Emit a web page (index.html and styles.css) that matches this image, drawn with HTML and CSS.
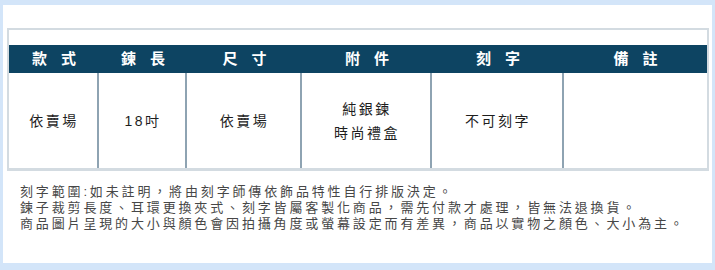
FILE: index.html
```html
<!DOCTYPE html>
<html lang="zh-Hant">
<head>
<meta charset="utf-8">
<title>商品規格</title>
<link rel="stylesheet" href="styles.css">
</head>
<body>
<div class="frame">
  <div class="spec">
    <div class="grid head">
      <div class="hcell">款式</div>
      <div class="hcell">鍊長</div>
      <div class="hcell">尺寸</div>
      <div class="hcell">附件</div>
      <div class="hcell">刻字</div>
      <div class="hcell">備註</div>
    </div>
    <div class="grid body">
      <div class="cell">依賣場</div>
      <div class="cell sep">18吋</div>
      <div class="cell sep">依賣場</div>
      <div class="cell sep">純銀鍊<br>時尚禮盒</div>
      <div class="cell sep">不可刻字</div>
      <div class="cell sep"></div>
    </div>
  </div>
  <div class="notes">
    <p>刻字範圍:如未註明，將由刻字師傳依飾品特性自行排版決定。</p>
    <p>鍊子裁剪長度、耳環更換夾式、刻字皆屬客製化商品，需先付款才處理，皆無法退換貨。</p>
    <p>商品圖片呈現的大小與顏色會因拍攝角度或螢幕設定而有差異，商品以實物之顏色、大小為主。</p>
  </div>
</div>
</body>
</html>
```
FILE: styles.css
```css
html, body {
  margin: 0;
  padding: 0;
}
body {
  background: #d3e5f9;
  width: 715px;
  height: 270px;
  overflow: hidden;
  font-family: "Liberation Sans", "Noto Sans CJK TC", sans-serif;
}
.frame {
  background: #ffffff;
  margin: 5px 3px 0 3px;
  height: 258px;
  padding: 23px 3px 0 4px;
  box-sizing: border-box;
}
.spec {
  border: 2px solid #d3dbe1;
  border-bottom-width: 3px;
  padding-top: 15px;
}
.grid {
  display: grid;
  grid-template-columns: 90px 88px 115px 130px 132px 143px;
}
.head {
  background: #0d4462;
  height: 28px;
}
.hcell {
  color: #ffffff;
  font-weight: bold;
  font-size: 15px;
  line-height: 28px;
  text-align: center;
  letter-spacing: 14px;
  text-indent: 14px;
}
.body {
  height: 95px;
}
.cell {
  display: flex;
  align-items: center;
  justify-content: center;
  text-align: center;
  font-size: 14px;
  line-height: 24px;
  letter-spacing: 2.5px;
  color: #1e1e1e;
}
.sep {
  border-left: 2px solid #8ea3b2;
  margin-left: -2px;
}
.notes {
  padding: 13px 0 0 13px;
  color: #474747;
  font-size: 13px;
  line-height: 16px;
  letter-spacing: 2.85px;
}
.notes p {
  margin: 0;
  white-space: nowrap;
}
```
